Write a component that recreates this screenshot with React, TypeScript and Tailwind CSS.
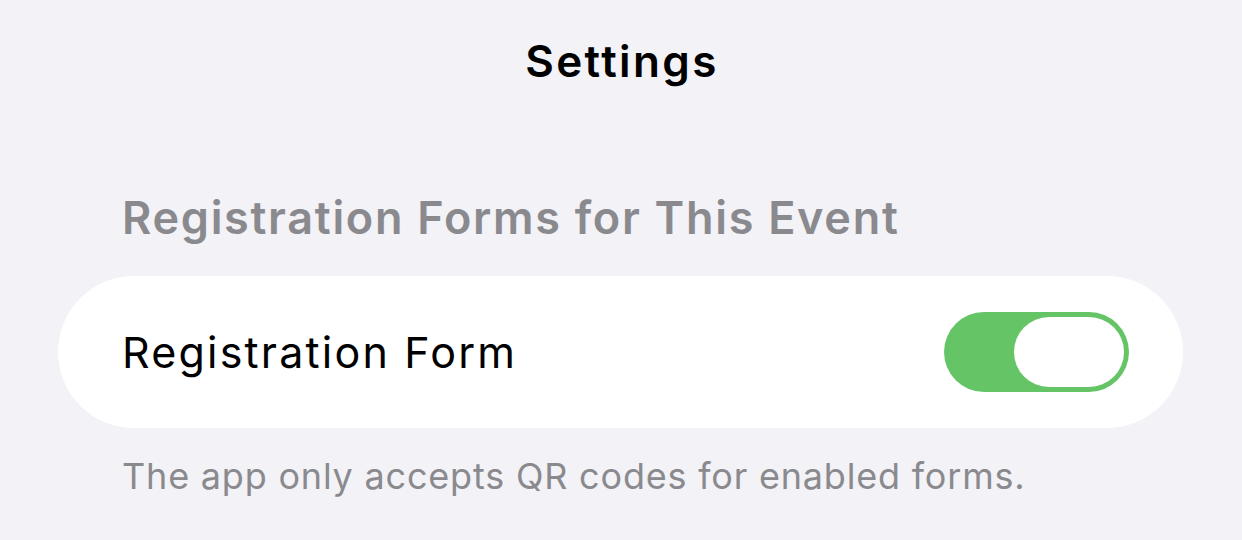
import { useState } from 'react';

function Toggle({ on, onChange }: { on: boolean; onChange: () => void }) {
  return (
    <button
      onClick={onChange}
      className={`flex items-center w-[185px] h-[80px] rounded-full p-[5px] ${on ? 'bg-[#65c466] justify-end' : 'bg-[#e9e9ea] justify-start'}`}
    >
      <span className="block w-[110px] h-[70px] rounded-full bg-white" />
    </button>
  );
}

export default function App() {
  const [enabled, setEnabled] = useState(true);

  return (
    <div className="h-[540px] bg-[#f2f2f7] overflow-hidden font-['Inter','Noto_Sans',sans-serif]">
      <h1 className="pt-[39px] pl-[2px] text-center text-[44px] leading-[44px] font-semibold tracking-[2.4px] text-black">
        Settings
      </h1>

      <h2 className="mt-[112px] pl-[122px] text-[45px] leading-[45px] font-semibold tracking-[1.7px] text-[#8a8a8e]">
        Registration Forms for This Event
      </h2>

      <div className="mt-[36px] ml-[58px] mr-[59px] h-[152px] rounded-full bg-white flex items-center justify-between pl-[64px] pr-[54px]">
        <span className="text-[43px] leading-[43px] tracking-[2.2px] text-black">Registration Form</span>
        <Toggle on={enabled} onChange={() => setEnabled(!enabled)} />
      </div>

      <p className="mt-[30px] pl-[122px] text-[36px] leading-[36px] tracking-[0.8px] text-[#8a8a8e]">
        The app only accepts QR codes for enabled forms.
      </p>
    </div>
  );
}
